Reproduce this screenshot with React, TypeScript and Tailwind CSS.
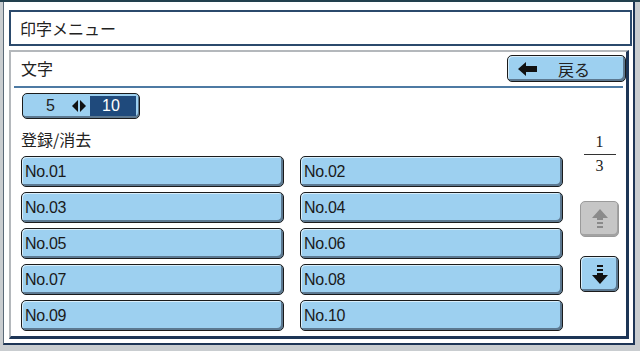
import React from "react";

const JP = "font-['Noto_Sans_CJK_JP','Liberation_Sans',sans-serif]";

const SLOTS = ["01", "02", "03", "04", "05", "06", "07", "08", "09", "10"];

function LeftArrow() {
  return (
    <svg width="20" height="14" viewBox="0 0 20 14" className="shrink-0">
      <path d="M0 7 L8 0 L8 4 L19 4 L19 10 L8 10 L8 14 Z" fill="#111" />
    </svg>
  );
}

function SwapArrows() {
  return (
    <svg width="14" height="12" viewBox="0 0 14 12" className="shrink-0">
      <path d="M6 0 L0 6 L6 12 Z" fill="#111" />
      <path d="M8 0 L14 6 L8 12 Z" fill="#111" />
    </svg>
  );
}

function ScrollArrow({ dir, color }: { dir: "up" | "down"; color: string }) {
  return (
    <svg width="16" height="20" viewBox="0 0 16 20" className={dir === "down" ? "rotate-180" : ""}>
      <path d="M8 0 L16 9 L11 9 L11 11 L5 11 L5 9 L0 9 Z" fill={color} />
      <rect x="5" y="13" width="6" height="2" fill={color} />
      <rect x="5" y="17" width="6" height="2" fill={color} />
    </svg>
  );
}

function SlotButton({ label }: { label: string }) {
  return (
    <button
      type="button"
      className="flex h-[31px] w-[263px] items-center rounded-[5px] border border-[#1b1b1b] bg-[#9dd0f0] pl-[3px] pt-[1px] text-left text-[16px] text-[#1a1a1a] shadow-[inset_-2px_-2px_0_#5c7890,inset_1px_1px_0_#d8eefb] font-['Liberation_Sans',sans-serif] tracking-[-0.3px]"
    >
      No.{label}
    </button>
  );
}

export default function App() {
  return (
    <div className={`h-[351px] w-[640px] overflow-hidden border-t-2 border-[#22404e] bg-[#c9cdd0] ${JP}`}>
      <div className="ml-[3px] h-[343px] w-[632px] border-l border-r-2 border-b-2 border-l-[#5a6a78] border-r-[#1d3556] border-b-[#1d3556] bg-white pt-[8px]">
        <div className="ml-[5px] flex h-[36px] w-[623px] items-center border-2 border-[#2b4a6c] pl-[9px] text-[16px] text-[#222]">
          印字メニュー
        </div>

        <div className="ml-[5px] mt-[4px] flex h-[289px] w-[620px] flex-col border-l-2 border-t-2 border-r-[3px] border-b-[3px] border-l-[#b4b8bc] border-t-[#b4b8bc] border-r-[#1d3556] border-b-[#1d3556]">
          <div className="flex h-[30px] items-end justify-between">
            <span className="pb-[2px] pl-[10px] text-[16px] text-[#222]">文字</span>
            <button
              type="button"
              className="flex h-[27px] w-[119px] items-center rounded-[5px] border border-[#1b1b1b] bg-[#9dd0f0] pl-[10px] text-[16px] text-[#222] shadow-[inset_-2px_-2px_0_#5c7890,inset_1px_1px_0_#d8eefb]"
            >
              <LeftArrow />
              <span className="ml-[20px]">戻る</span>
            </button>
          </div>

          <div className="mx-[3px] mt-[4px] h-[2px] bg-[#4d7aa3]" />

          <div className="ml-[11px] mt-[5px] flex h-[26px] w-[118px] items-stretch overflow-hidden rounded-[5px] border border-[#1b1b1b] bg-[#9dd0f0] p-[2px] shadow-[inset_-1px_-2px_0_#5c7890]">
            <div className="flex w-[65px] shrink-0 items-center bg-[#9dd0f0] pl-[21px] font-['Liberation_Sans',sans-serif] text-[16px] text-[#222]">
              <span>5</span>
              <span className="ml-[17px] flex"><SwapArrows /></span>
            </div>
            <div className="flex w-[46px] shrink-0 items-center bg-[#1f4a7c] pl-[12px] font-['Liberation_Sans',sans-serif] text-[16px] text-white">
              10
            </div>
          </div>

          <div className="flex">
            <div className="ml-[10px] flex flex-col">
              <div className="mt-[10px] h-[20px] text-[16px] leading-[20px] text-[#222]">登録/消去</div>
              <div className="mt-[7px] grid grid-cols-2 gap-x-[16px] gap-y-[5px]">
                {SLOTS.map((s) => (
                  <SlotButton key={s} label={s} />
                ))}
              </div>
            </div>

            <div className="ml-[17px] flex w-[39px] flex-col items-center">
              <div className="mt-[13px] h-[20px] font-['Liberation_Serif',serif] text-[16px] leading-[20px] text-[#222]">1</div>
              <div className="mt-[2px] h-px w-[32px] bg-[#333]" />
              <div className="h-[22px] font-['Liberation_Serif',serif] text-[16px] leading-[22px] text-[#222]">3</div>
              <button
                type="button"
                className="mt-[24px] flex h-[36px] w-[39px] items-center justify-center rounded-[5px] border border-[#9a9a9a] bg-[#c6c6c6] shadow-[inset_-1px_-2px_0_#a2a2a2]"
              >
                <ScrollArrow dir="up" color="#8a8a8a" />
              </button>
              <button
                type="button"
                className="mt-[19px] flex h-[36px] w-[39px] items-center justify-center rounded-[5px] border border-[#1b1b1b] bg-[#9dd0f0] shadow-[inset_-2px_-2px_0_#5c7890,inset_1px_1px_0_#d8eefb]"
              >
                <ScrollArrow dir="down" color="#111" />
              </button>
            </div>
          </div>
        </div>
      </div>
    </div>
  );
}
